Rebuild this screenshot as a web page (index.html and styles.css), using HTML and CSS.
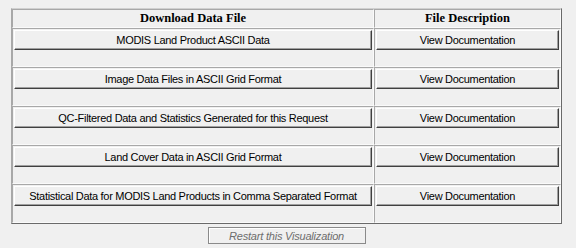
FILE: index.html
```html
<!DOCTYPE html>
<html lang="en">
<head>
  <meta charset="UTF-8" />
  <title>Download Data</title>
  <link rel="stylesheet" href="styles.css">
</head>
<body>
  <div class="page">
    <table class="downloads">
      <thead>
        <tr>
          <th class="col-file">Download Data File</th>
          <th class="col-desc">File Description</th>
        </tr>
      </thead>
      <tbody>
        <tr>
          <td><button type="button" class="btn">MODIS Land Product ASCII Data</button></td>
          <td><button type="button" class="btn">View Documentation</button></td>
        </tr>
        <tr>
          <td><button type="button" class="btn">Image Data Files in ASCII Grid Format</button></td>
          <td><button type="button" class="btn">View Documentation</button></td>
        </tr>
        <tr>
          <td><button type="button" class="btn">QC-Filtered Data and Statistics Generated for this Request</button></td>
          <td><button type="button" class="btn">View Documentation</button></td>
        </tr>
        <tr>
          <td><button type="button" class="btn">Land Cover Data in ASCII Grid Format</button></td>
          <td><button type="button" class="btn">View Documentation</button></td>
        </tr>
        <tr>
          <td><button type="button" class="btn">Statistical Data for MODIS Land Products in Comma Separated Format</button></td>
          <td><button type="button" class="btn">View Documentation</button></td>
        </tr>
      </tbody>
    </table>
    <div class="restart">
      <button type="button" class="btn-restart" disabled>Restart this Visualization</button>
    </div>
  </div>
</body>
</html>
```

FILE: styles.css
```css
body {
  margin: 0;
  background-color: #f0f0f0;
  font-family: "Liberation Sans", Arial, sans-serif;
}

.page {
  width: 551px;
  padding: 8px 0 0 11px;
}

.downloads {
  width: 551px;
  border-collapse: separate;
  border-spacing: 0;
  border: 1px solid;
  border-color: #d0d0d0 #6a6a6a #6a6a6a #a8a8a8;
}

.downloads th,
.downloads td {
  padding: 0 1px;
  border: 1px solid;
  border-color: #a8a8a8 #fafafa #fafafa #a8a8a8;
}

.downloads th {
  height: 17px;
  font-family: "Liberation Serif", "Times New Roman", serif;
  font-size: 12.5px;
  font-weight: bold;
  color: #000;
  text-align: center;
}

.col-file {
  width: 358px;
}

.downloads td {
  height: 36px;
  padding-top: 1px;
  vertical-align: top;
}

.btn {
  display: block;
  width: 100%;
  height: 20px;
  margin: 0;
  padding: 0;
  background-color: #f0f0f0;
  border: 1px solid;
  border-color: #ffffff #404040 #404040 #ffffff;
  box-shadow: inset -1px -1px 0 #a0a0a0;
  font-family: "Liberation Sans", Arial, sans-serif;
  font-size: 11px;
  letter-spacing: -0.3px;
  color: #000;
  cursor: pointer;
}

.restart {
  margin-top: 3px;
  text-align: center;
}

.btn-restart {
  width: 158px;
  height: 17px;
  padding: 0;
  vertical-align: top;
  background-color: #f0f0f0;
  border: 1px solid #8a8a8a;
  box-shadow: inset 1px 1px 0 #ffffff;
  font-family: "Liberation Sans", Arial, sans-serif;
  font-size: 11px;
  font-style: italic;
  letter-spacing: -0.2px;
  color: #6d6d6d;
}
```
